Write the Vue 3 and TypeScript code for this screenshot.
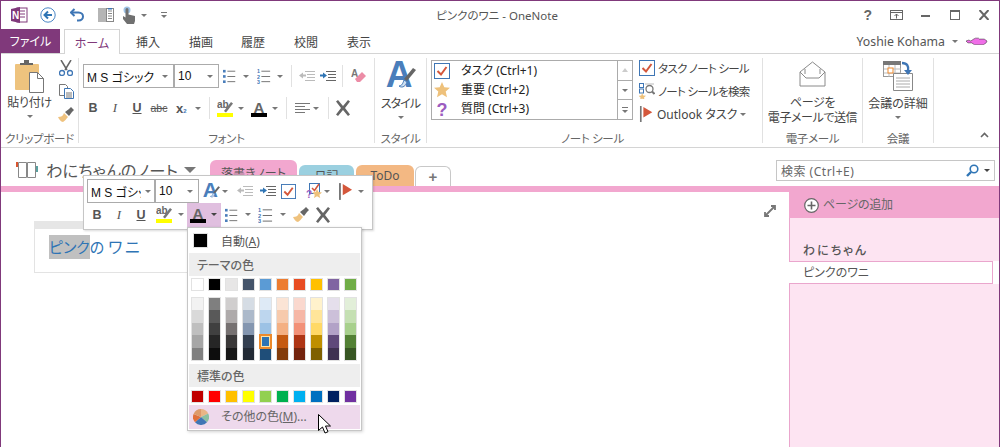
<script setup lang="ts">
const themeTop: string[] = ['#ffffff','#000000','#e7e6e6','#44546a','#5b9bd5','#ed7d31','#e84c22','#ffc000','#8064a2','#70ad47']
const tints: string[][] = [
  ['#f2f2f2','#d9d9d9','#bfbfbf','#a6a6a6','#808080'],
  ['#7f7f7f','#595959','#404040','#262626','#0d0d0d'],
  ['#d0cece','#aeaaaa','#767171','#3a3838','#171717'],
  ['#d5dce4','#acb9ca','#8496b0','#333f50','#222a35'],
  ['#deeaf6','#bdd6ee','#9cc2e5','#2e74b5','#1f4e79'],
  ['#fbe4d5','#f7caac','#f4b083','#c55a11','#833c0b'],
  ['#fad8ce','#f6b7a6','#f29178','#ae3515','#74240e'],
  ['#fff2cc','#ffe599','#ffd966','#bf8f00','#7f6000'],
  ['#e5dfec','#ccc0d9','#b2a2c7','#5f497a','#3f3151'],
  ['#e2efd9','#c5e0b3','#a8d08d','#538135','#375623'],
]
const standard: string[] = ['#c00000','#ff0000','#ffc000','#ffff00','#92d050','#00b050','#00b0f0','#0070c0','#002060','#7030a0']
const tagRows = [
  { icon: '#i-check', label: 'タスク (Ctrl+1)' },
  { icon: '#i-star', label: '重要 (Ctrl+2)' },
  { icon: '#i-question', label: '質問 (Ctrl+3)' },
]
</script>

<template>
  <div class="win">
    <svg class="sprite" xmlns="http://www.w3.org/2000/svg">
      <symbol id="i-bullets" viewBox="0 0 16 16">
        <g fill="#4a7ebb"><rect x="0" y="1" width="3" height="3"/><rect x="0" y="7" width="3" height="3"/><rect x="0" y="13" width="3" height="3"/></g>
        <g fill="#666"><rect x="5" y="2" width="9" height="1"/><rect x="5" y="8" width="9" height="1"/><rect x="5" y="14" width="9" height="1"/></g>
      </symbol>
      <symbol id="i-numbers" viewBox="0 0 16 16">
        <g fill="#3f76b5" font-size="6" font-weight="700" font-family="Liberation Sans, sans-serif"><text x="0" y="5">1</text><text x="0" y="11">2</text><text x="0" y="17">3</text></g>
        <g fill="#666"><rect x="5" y="2" width="10" height="1"/><rect x="5" y="8" width="10" height="1"/><rect x="5" y="14" width="10" height="1"/></g>
      </symbol>
      <symbol id="i-outdent" viewBox="0 0 16 12">
        <g fill="#bbb"><rect x="6" y="1" width="10" height="1"/><rect x="8" y="4" width="8" height="1"/><rect x="8" y="7" width="8" height="1"/><rect x="6" y="10" width="10" height="1"/><path d="M0 5.5 4 2.500v2h3v2H4v2z"/></g>
      </symbol>
      <symbol id="i-indent" viewBox="0 0 16 12">
        <g fill="#666"><rect x="6" y="1" width="10" height="1"/><rect x="8" y="4" width="8" height="1"/><rect x="8" y="7" width="8" height="1"/><rect x="6" y="10" width="10" height="1"/></g>
        <path d="M7 5.500 3 2.500v2H0v2h3v2z" fill="#2f75b5"/>
      </symbol>
      <symbol id="i-hilite" viewBox="0 0 16 17">
        <text x="0" y="8" font-size="10" font-weight="700" fill="#666" font-family="Liberation Sans, sans-serif">ab</text>
        <path d="M7 11 14 2l2 1.500L9 12.500z" fill="#777"/>
        <rect x="0" y="13" width="16" height="4" fill="#ffff00"/>
      </symbol>
      <symbol id="i-fcolor" viewBox="0 0 16 17">
        <text x="8" y="12.500" text-anchor="middle" font-size="15" font-weight="700" fill="#666" font-family="Liberation Sans, sans-serif">A</text>
        <rect x="0" y="13" width="16" height="4" fill="#000"/>
      </symbol>
      <symbol id="i-brush" viewBox="0 0 16 16">
        <path d="M0 10c3 0 5-1 6-4l4 4c-2 2-3 4-5 5-2 0-4-3-5-5z" fill="#efc27e"/>
        <path d="M7 5l4-3 2-2 3 3-2 2-3 4z" fill="#666"/>
      </symbol>
      <symbol id="i-cross" viewBox="0 0 16 16">
        <path d="M1 1.500 3 0l5 6 5-6 2 1.500L10 8l5 6.500-2 1.500-5-6-5 6-2-1.500L6 8z" fill="#666"/>
      </symbol>
      <symbol id="i-check" viewBox="0 0 16 16">
        <rect x=".5" y=".5" width="15" height="15" fill="#fff" stroke="#3f76b5"/>
        <path d="M3.500 8 7 11.500 12.500 4" fill="none" stroke="#d4573b" stroke-width="2"/>
      </symbol>
      <symbol id="i-star" viewBox="0 0 16 16">
        <path d="M8 0l2.300 5.300 5.700.5-4.300 3.800 1.300 5.600L8 12.300l-5 2.900 1.300-5.600L0 5.800l5.700-.5z" fill="#eec17b"/>
      </symbol>
      <symbol id="i-question" viewBox="0 0 16 16">
        <text x="8" y="15" text-anchor="middle" font-size="18" font-weight="700" fill="#9c5cc0" font-family="Liberation Sans, sans-serif">?</text>
      </symbol>
      <symbol id="i-tagfind" viewBox="0 0 16 16">
        <rect x="3.500" y=".5" width="10" height="10" fill="none" stroke="#3f76b5"/>
        <path d="M6 5l2.500 2.500L13 1" fill="none" stroke="#d4573b" stroke-width="1.500"/>
        <text x="0" y="15" font-size="10" font-weight="700" fill="#9c5cc0" font-family="Liberation Sans, sans-serif">?</text>
        <path d="M11 6l1.500 3 3.500.4-2.600 2.300.8 3.300-3.200-1.800L8 15l.8-3.300L6.200 9.400 9.500 9z" fill="#eec17b"/>
      </symbol>
      <symbol id="i-flag" viewBox="0 0 15 18">
        <rect x="0" y="0" width="2" height="18" fill="#777"/>
        <path d="M4 1l10 6-10 6z" fill="#d4573b"/>
      </symbol>
      <symbol id="i-stylea" viewBox="0 0 30 31">
        <text x="13" y="26" text-anchor="middle" font-size="37" font-weight="700" fill="#4a7ebb" font-family="Liberation Sans, sans-serif">A</text>
        <path d="M18 18 27 7l3 2-9 11z" fill="#666"/>
        <path d="M13 25c3 0 4-3 5-6l3 2c-1 3-4 7-8 4z" fill="#cfe0f2" stroke="#4a7ebb"/>
      </symbol>
    </svg>

    <header class="titlebar">
      <div class="qat">
        <svg class="ml10" width="17" height="16" viewBox="0 0 17 16">
          <rect x="6" y="1" width="10" height="14" fill="#fff" stroke="#80397b"/>
          <path d="M9 4h5M9 7h5M9 10h5" stroke="#80397b"/>
          <path d="M0 2l9-2v16l-9-2z" fill="#80397b"/>
          <text x="4.500" y="11.500" text-anchor="middle" font-size="10" font-weight="700" fill="#fff" font-family="Liberation Sans, sans-serif">N</text>
        </svg>
        <svg class="ml12" width="16" height="16" viewBox="0 0 16 16">
          <circle cx="8" cy="8" r="7.200" fill="none" stroke="#4a86c5"/>
          <path d="M12 8H5M8 4.500 4.500 8 8 11.500" fill="none" stroke="#2f75b5" stroke-width="2"/>
        </svg>
        <svg class="ml14" width="15" height="14" viewBox="0 0 15 14">
          <path d="M4.500 1 1 4.500 4.500 8" fill="none" stroke="#3f76b5" stroke-width="2"/>
          <path d="M2 4.500h6.500c6 0 6 8 0 8H7" fill="none" stroke="#3f76b5" stroke-width="2"/>
        </svg>
        <svg class="ml13" width="16" height="14" viewBox="0 0 16 14">
          <rect x="0" y="0" width="8" height="14" fill="#b5b5b5"/>
          <rect x="8.500" y=".5" width="7" height="13" fill="#fff" stroke="#888"/>
          <path d="M10 3h4M10 5.500h4M10 8h4M10 10.500h4" stroke="#888"/>
          <rect x="10" y="0" width="4" height="1.500" fill="#3f76b5"/>
        </svg>
        <svg class="ml8" width="14" height="18" viewBox="0 0 14 18">
          <circle cx="5" cy="4" r="3.500" fill="#9fc3e6"/>
          <path d="M3.500 3.500v8L1 10v3l4 5h7l1-3v-5L6.500 8.500v-5a1.500 1.500 0 0 0-3 0z" fill="#707070"/>
        </svg>
        <i class="caret ml5"></i>
        <span class="custom ml14"><b></b><i class="caret"></i></span>
      </div>
      <div class="title">ピンクのワニ - OneNote</div>
      <div class="winbtns">
        <span class="q">?</span>
        <svg class="ml18" width="13" height="10" viewBox="0 0 13 10">
          <rect x=".5" y=".5" width="12" height="9" fill="none" stroke="#666"/>
          <path d="M0 2.500h13M6.500 8.500V4M4.500 6l2-2 2 2" fill="none" stroke="#666"/>
        </svg>
        <svg class="ml18" width="9" height="3" viewBox="0 0 9 3"><rect width="9" height="2" y="1" fill="#666"/></svg>
        <svg class="ml20" width="10" height="10" viewBox="0 0 10 10"><rect x=".5" y="1" width="9" height="8.500" fill="none" stroke="#666"/><rect width="10" height="2" fill="#666"/></svg>
        <svg class="ml19" width="10" height="10" viewBox="0 0 10 10"><path d="M.5 0l9 10M9.500 0 .5 10" stroke="#666" stroke-width="2"/></svg>
      </div>
    </header>

    <nav class="tabs">
      <div class="file">ファイル</div>
      <div class="tab active">ホーム</div>
      <div class="tab t1">挿入</div>
      <div class="tab t2">描画</div>
      <div class="tab t3">履歴</div>
      <div class="tab t4">校閲</div>
      <div class="tab t5">表示</div>
      <div class="user">
        <span>Yoshie Kohama</span>
        <i class="caret ml7"></i>
        <svg class="ml8" width="22" height="8" viewBox="0 0 23 8">
          <path d="M0 4l3-1 2 1 3-2 2-1h3l1 1h5l3 2-1 2-3 2H9L6 6H2z" fill="#f06ee8" stroke="#222" stroke-width=".5"/>
        </svg>
      </div>
    </nav>

    <section class="ribbon">
      <div class="group g-clip">
        <div class="gbody clip">
          <div class="large paste">
            <svg width="30" height="33" viewBox="0 0 30 33">
              <rect x="0" y="4" width="24" height="26" rx="1" fill="#eec37e"/>
              <path d="M5 5V3h4V0h5v3h4v2z" fill="#666"/>
              <path d="M14.500 12.500h8l6 6v14h-14z" fill="#fff" stroke="#777"/>
              <path d="M22.500 12.500v6h6" fill="none" stroke="#777"/>
            </svg>
            <span class="biglabel">貼り付け</span>
            <i class="caret"></i>
          </div>
          <div class="clipside">
            <svg width="14" height="16" viewBox="0 0 14 16">
              <path d="M2 0l6 10M12 0 6 10" stroke="#666" stroke-width="1.500"/>
              <circle cx="3" cy="13" r="2.500" fill="none" stroke="#3f76b5" stroke-width="1.300"/>
              <circle cx="11" cy="13" r="2.500" fill="none" stroke="#3f76b5" stroke-width="1.300"/>
            </svg>
            <svg width="15" height="15" viewBox="0 0 15 15">
              <path d="M.5.500h6l2 2v9H.5z" fill="#fff" stroke="#777"/>
              <path d="M5.500 4.500h6l3 3v7h-9z" fill="#fff" stroke="#3f76b5"/>
              <path d="M7 9h6M7 11h6M7 13h6" stroke="#777"/>
            </svg>
            <svg width="16" height="16"><use href="#i-brush"/></svg>
          </div>
        </div>
        <div class="glabel">クリップボード</div>
      </div>

      <div class="group g-font">
        <div class="gbody frows">
          <div class="frow r1">
            <div class="combo c-font"><span class="fname">M S ゴシック</span><i class="caret"></i></div>
            <div class="combo c-size"><span class="fname">10</span><i class="caret"></i></div>
            <svg class="ml4" width="14" height="16"><use href="#i-bullets"/></svg>
            <i class="caret ml6"></i>
            <svg class="ml8" width="14" height="16"><use href="#i-numbers"/></svg>
            <i class="caret ml6"></i>
            <span class="vsep ml8"></span>
            <svg class="ml7" width="16" height="12"><use href="#i-outdent"/></svg>
            <svg class="ml5" width="16" height="12"><use href="#i-indent"/></svg>
            <span class="vsep ml6"></span>
            <svg class="ml8" width="16" height="16" viewBox="0 0 16 16">
              <text x="0" y="9" font-size="10" font-weight="700" fill="#777" font-family="Liberation Sans, sans-serif">A</text>
              <path d="M4 11l7-7 4 4-6 6H6z" fill="#ec8ca6"/>
            </svg>
          </div>
          <div class="frow r2">
            <span class="fb">B</span>
            <span class="fb it">I</span>
            <span class="fb ul">U</span>
            <span class="fb st">abc</span>
            <span class="fb sub">x<small>2</small></span>
            <i class="caret"></i>
            <span class="vsep ml8"></span>
            <svg class="ml7" width="16" height="17"><use href="#i-hilite"/></svg>
            <i class="caret ml5"></i>
            <svg class="ml7" width="16" height="17"><use href="#i-fcolor"/></svg>
            <i class="caret ml5"></i>
            <span class="vsep ml8"></span>
            <svg class="ml8" width="15" height="11" viewBox="0 0 15 11"><path d="M0 .500h15M0 3.500h10M0 6.500h15M0 9.500h10" stroke="#777"/></svg>
            <i class="caret ml3"></i>
            <span class="vsep ml9"></span>
            <svg class="ml6" width="16" height="16"><use href="#i-cross"/></svg>
          </div>
        </div>
        <div class="glabel">フォント</div>
      </div>

      <div class="group g-style">
        <div class="gbody large top3">
          <svg width="30" height="31"><use href="#i-stylea"/></svg>
          <span class="biglabel narrow">スタイル</span>
          <i class="caret"></i>
        </div>
        <div class="glabel">スタイル</div>
      </div>

      <div class="group g-tags">
        <div class="gbody tagsbody">
          <div class="taglist">
            <div class="tagrows">
              <div v-for="t in tagRows" :key="t.label" class="tagrow">
                <svg width="16" height="16"><use :href="t.icon"/></svg>
                <span>{{ t.label }}</span>
              </div>
            </div>
            <div class="tagscroll">
              <span><i class="caret up dis"></i></span>
              <span><i class="caret"></i></span>
              <span class="more"><b></b><i class="caret"></i></span>
            </div>
          </div>
          <div class="tagside">
            <div class="sr"><svg width="16" height="16"><use href="#i-check"/></svg><span class="tight">タスク ノート シール</span></div>
            <div class="sr">
              <svg width="16" height="16" viewBox="0 0 16 16">
                <rect x=".5" y=".5" width="4" height="4" fill="none" stroke="#3f76b5"/>
                <rect x=".5" y="6" width="4" height="4" fill="none" stroke="#3f76b5"/>
                <path d="M3 10l1.300 2.500 2.700.3-2 1.700.6 2.500L3 15.500 1 17l.6-2.500-2-1.700 2.700-.3z" fill="#eec17b"/>
                <circle cx="10.500" cy="6" r="3.500" fill="#fff" stroke="#777" stroke-width="1.300"/>
                <path d="M13 8.500l2.500 2.500" stroke="#777" stroke-width="2"/>
                <path d="M6 1h9" stroke="#bbb"/>
              </svg>
              <span class="tight">ノート シールを検索</span>
            </div>
            <div class="sr"><svg width="15" height="16" viewBox="0 0 15 18"><use href="#i-flag"/></svg><span class="ltool">Outlook タスク</span><i class="caret ml3"></i></div>
          </div>
        </div>
        <div class="glabel lbl-tags">ノート シール</div>
      </div>

      <div class="group g-mail">
        <div class="gbody large top3">
          <svg width="27" height="26" viewBox="0 0 27 26">
            <path d="M1 11 13.500 1 26 11v14H1z" fill="#fff" stroke="#8a8a8a"/>
            <path d="M1 11l6 6h13l6-6M6 8v5M21 8v5" fill="none" stroke="#8a8a8a"/>
          </svg>
          <span class="biglabel two">ページを<br>電子メールで送信</span>
        </div>
        <div class="glabel">電子メール</div>
      </div>

      <div class="group g-meet">
        <div class="gbody large top3">
          <svg width="31" height="30" viewBox="0 0 31 30">
            <rect x=".5" y=".5" width="17" height="15" fill="#fff" stroke="#999"/>
            <rect width="18" height="4" fill="#777"/>
            <path d="M6 4v12M12 4v12M1 8h17M1 12h17" stroke="#bbb"/>
            <rect x="5" y="7" width="5" height="5" fill="#fff" stroke="#ed8a2f"/>
            <path d="M10.500 12.500h19v17h-19z" fill="#fff" stroke="#888"/>
            <path d="M13 17h14M13 20h14M13 23h14M13 26h14" stroke="#aaa"/>
            <path d="M19 2c5 0 7 3 6 8" fill="none" stroke="#3f76b5" stroke-width="2.500"/>
            <path d="M21 9h8l-4 5z" fill="#3f76b5"/>
          </svg>
          <span class="biglabel meet">会議の詳細</span>
          <i class="caret"></i>
        </div>
        <div class="glabel">会議</div>
      </div>

      <div class="collapse">
        <svg width="9" height="6" viewBox="0 0 9 6"><path d="M1 5l3.500-3.500L8 5" fill="none" stroke="#666" stroke-width="1.600"/></svg>
      </div>
    </section>

    <div class="nbbar">
      <div class="nb">
        <svg width="22" height="18" viewBox="0 0 22 18">
          <path d="M2.500 1.500h8v15h-8zM11.500 1.500h8v15h-8z" fill="#fff" stroke="#888"/>
          <rect x="0" y="1" width="2" height="5" fill="#d9552f"/>
          <rect x="20" y="5" width="2" height="6" fill="#5aa0a0"/>
        </svg>
        <span class="nbname">わにちゃんのノート</span>
        <i class="caret big"></i>
      </div>
      <div class="stabs">
        <div class="stab pink">落書きノート</div>
        <div class="stab blue">日記</div>
        <div class="stab orange">ToDo</div>
        <div class="stab plus">+</div>
      </div>
      <div class="search">
        <span>検索 (Ctrl+E)</span>
        <svg width="13" height="13" viewBox="0 0 13 13">
          <circle cx="8" cy="5" r="3.800" fill="#fff" stroke="#2f75b5" stroke-width="1.600"/>
          <path d="M5 8 1 12" stroke="#2f75b5" stroke-width="2.400"/>
        </svg>
        <i class="caret dark ml5"></i>
      </div>
    </div>
    <div class="pinkline"></div>

    <div class="content">
      <main class="page">
        <div class="expand">
          <svg width="12" height="12" viewBox="0 0 12 12">
            <path d="M1 11 11 1M1 7v4h4M7 1h4v4" fill="none" stroke="#777" stroke-width="1.800"/>
          </svg>
        </div>
        <div class="outline">
          <div class="handle"></div>
          <div class="note"><span class="sel">ピンク</span>の <span class="wani">ワニ</span></div>
        </div>
      </main>
      <aside class="side">
        <div class="addpage">
          <svg width="15" height="15" viewBox="0 0 15 15">
            <circle cx="7.500" cy="7.500" r="6.800" fill="#fff" stroke="#666" stroke-width="1.200"/>
            <path d="M7.500 3.500v8M3.500 7.500h8" stroke="#666" stroke-width="1.600"/>
          </svg>
          <span>ページの追加</span>
        </div>
        <div class="sectop"><span>わにちゃん</span></div>
        <div class="pagerow">ピンクのワニ</div>
        <div class="secbot"></div>
      </aside>
    </div>

    <div class="mini">
      <div class="mrow m1">
        <div class="combo mc-font"><span class="fname clip-t">M S ゴシック</span><i class="caret"></i></div>
        <div class="combo mc-size"><span class="fname">10</span><i class="caret"></i></div>
        <svg class="ml4" width="17" height="18" viewBox="0 0 30 31"><use href="#i-stylea" width="30" height="31"/></svg>
        <i class="caret ml2"></i>
        <svg class="ml9" width="16" height="12"><use href="#i-outdent"/></svg>
        <svg class="ml7" width="16" height="12"><use href="#i-indent"/></svg>
        <svg class="ml5" width="15" height="15"><use href="#i-check"/></svg>
        <svg class="ml10" width="16" height="16"><use href="#i-tagfind"/></svg>
        <i class="caret ml2"></i>
        <svg class="ml9" width="14" height="17" viewBox="0 0 15 18"><use href="#i-flag"/></svg>
        <i class="caret ml5"></i>
      </div>
      <div class="mrow m2">
        <span class="fb">B</span>
        <span class="fb it">I</span>
        <span class="fb ul">U</span>
        <svg class="ml4" width="16" height="17"><use href="#i-hilite"/></svg>
        <i class="caret ml6"></i>
        <div class="fcbtn">
          <svg width="16" height="17"><use href="#i-fcolor"/></svg>
          <i class="caret dark"></i>
        </div>
        <svg class="ml4" width="14" height="16"><use href="#i-bullets"/></svg>
        <i class="caret ml6"></i>
        <svg class="ml7" width="15" height="16"><use href="#i-numbers"/></svg>
        <i class="caret ml7"></i>
        <svg class="ml7" width="16" height="16"><use href="#i-brush"/></svg>
        <svg class="ml6" width="16" height="16"><use href="#i-cross"/></svg>
      </div>
    </div>

    <div class="menu">
      <div class="auto"><span class="autoswatch"></span><span>自動(<u>A</u>)</span></div>
      <div class="mhead">テーマの色</div>
      <div class="swatches top">
        <span v-for="c in themeTop" :key="c" class="sw" :style="{ background: c }"></span>
      </div>
      <div class="swatches tints">
        <div v-for="(col, i) in tints" :key="i" class="tcol">
          <span v-for="(c, j) in col" :key="j" :class="['tc', { picked: i === 4 && j === 3 }]" :style="{ background: c }"></span>
        </div>
      </div>
      <div class="mhead h2">標準の色</div>
      <div class="swatches std">
        <span v-for="c in standard" :key="c" class="sw" :style="{ background: c }"></span>
      </div>
      <div class="more-row">
        <svg width="16" height="16" viewBox="0 0 16 16">
          <path d="M8 8V0a8 8 0 0 1 7.200 4.500z" fill="#e9b585"/>
          <path d="M8 8l7.200-3.500A8 8 0 0 1 14 13.300z" fill="#8cc0a0"/>
          <path d="M8 8l6 5.300a8 8 0 0 1-12 0z" fill="#3f76b5"/>
          <path d="M8 8l-6 5.300A8 8 0 0 1 .6 5z" fill="#e0703c"/>
          <path d="M8 8 .6 5A8 8 0 0 1 8 0z" fill="#dd9a6a"/>
        </svg>
        <span>その他の色(<u>M</u>)...</span>
      </div>
    </div>

    <svg class="cursor" width="13" height="20" viewBox="0 0 13 20">
      <path d="M.5.500v16l4-3.500 2.500 6 3-1.300L7.500 12H12.500z" fill="#fff" stroke="#000"/>
    </svg>
  </div>
</template>

<style scoped>
.win {
  position: relative;
  width: 1000px;
  height: 447px;
  box-sizing: border-box;
  border: 1px solid #80397b;
  border-bottom: none;
  background: #fff;
  overflow: hidden;
  display: flex;
  flex-direction: column;
  font-family: "Noto Sans", "Noto Sans CJK JP", sans-serif;
  font-size: 12px;
  font-feature-settings: "palt";
  color: #444;
}
.sprite { display: none; }
svg { display: block; flex: none; }

.ml2 { margin-left: 2px; } .ml3 { margin-left: 3px; } .ml4 { margin-left: 4px; } .ml5 { margin-left: 5px; } .ml6 { margin-left: 6px; }
.ml7 { margin-left: 7px; } .ml8 { margin-left: 8px; } .ml9 { margin-left: 9px; } .ml10 { margin-left: 10px; }
.ml12 { margin-left: 12px; } .ml13 { margin-left: 13px; } .ml14 { margin-left: 14px; } .ml18 { margin-left: 18px; } .ml19 { margin-left: 19px; } .ml20 { margin-left: 20px; }

.caret {
  display: block;
  flex: none;
  width: 0;
  height: 0;
  border-left: 3px solid transparent;
  border-right: 3px solid transparent;
  border-top: 3px solid #777;
}
.caret.dark { border-top-color: #444; }
.caret.big { border-left-width: 6px; border-right-width: 6px; border-top-width: 6px; margin-left: 6px; border-top-color: #777; }
.caret.up { border-top: none; border-bottom: 4px solid #777; }
.caret.up.dis { border-bottom-color: #ccc; }

.titlebar {
  height: 28px;
  flex: none;
  display: grid;
  grid-template-columns: 1fr auto 1fr;
  align-items: center;
}
.qat { display: flex; align-items: center; }
.custom { display: flex; flex-direction: column; gap: 2px; align-items: center; }
.custom b { width: 6px; height: 1px; background: #777; display: block; }
.title { margin-right: 6px; color: #555; font-size: 11.500px; }
.winbtns { display: flex; align-items: center; justify-content: flex-end; padding-right: 10px; }
.q { font: 700 14px "Liberation Sans", sans-serif; color: #666; }

.tabs {
  height: 24px;
  flex: none;
  display: flex;
  align-items: stretch;
  position: relative;
}
.file {
  width: 59px;
  background: #80397b;
  color: #fff;
  display: flex;
  align-items: center;
  justify-content: center;
}
.tab { display: flex; align-items: center; justify-content: center; color: #444; padding-top: 1px; box-sizing: border-box; }
.tab.active {
  width: 56px;
  margin-left: 4px;
  margin-bottom: -1px;
  border: 1px solid #d4d4d4;
  border-bottom: none;
  background: #fff;
  color: #80397b;
  position: relative;
  z-index: 1;
}
.t1 { margin-left: 16px; }
.t2 { margin-left: 29px; }
.t3 { margin-left: 28px; }
.t4 { margin-left: 29px; }
.t5 { margin-left: 29px; }
.user { margin-left: auto; padding-right: 11px; display: flex; align-items: center; color: #555; font-size: 12.300px; }

.ribbon {
  height: 95px;
  flex: none;
  box-sizing: border-box;
  border-top: 1px solid #d4d4d4;
  border-bottom: 1px solid #d4d4d4;
  display: flex;
  padding-top: 4px;
}
.group {
  box-sizing: border-box;
  height: 85px;
  border-right: 1px solid #e1e1e1;
  display: flex;
  flex-direction: column;
}
.gbody { height: 72px; flex: none; }
.glabel { height: 13px; line-height: 17px; text-align: center; color: #666; font-size: 11.500px; letter-spacing: -.3px; white-space: nowrap; }
.g-clip { width: 78px; }
.g-font { width: 296px; }
.g-style { width: 52px; }
.g-tags { width: 336px; }
.g-mail { width: 100px; }
.g-meet { width: 71px; }
.large { display: flex; flex-direction: column; align-items: center; }
.top3 { padding-top: 3px; box-sizing: border-box; }
.biglabel { color: #444; line-height: 15px; margin-top: 4px; margin-bottom: 5px; white-space: nowrap; text-align: center; letter-spacing: -.3px; }
.biglabel.narrow { letter-spacing: -.9px; }
.biglabel.two { margin-top: 8px; letter-spacing: -.4px; }
.biglabel.meet { margin-top: 5px; margin-bottom: 5px; letter-spacing: 0; }

.clip { display: flex; padding-top: 2px; box-sizing: border-box; }
.paste { width: 53px; margin-left: 2px; padding-top: 0; }
.paste .biglabel { margin-top: 2px; }
.clipside { margin-left: 2px; padding-top: 0; display: flex; flex-direction: column; gap: 8px; align-items: center; }

.frows { display: flex; flex-direction: column; padding: 6px 0 0 4px; box-sizing: border-box; }
.frow { display: flex; align-items: center; height: 24px; }
.r2 { margin-top: 8px; margin-left: -1px; }
.combo {
  box-sizing: border-box;
  height: 24px;
  border: 1px solid #ababab;
  display: flex;
  align-items: center;
  justify-content: space-between;
  padding: 0 5px 0 3px;
  background: #fff;
}
.c-font { width: 91px; }
.c-size { width: 45px; }
.fname { font-family: "Liberation Sans", "Noto Sans CJK JP", sans-serif; color: #111; font-size: 12px; white-space: nowrap; }
.vsep { width: 1px; height: 22px; background: #e1e1e1; flex: none; display: block; }
.fb {
  width: 22px;
  flex: none;
  text-align: center;
  font: 700 12.500px "Liberation Sans", sans-serif;
  color: #555;
}
.fb.it { font: italic 400 13px "Liberation Serif", serif; }
.fb.ul { text-decoration: underline; }
.fb.st { text-decoration: line-through; font-weight: 400; font-size: 10.500px; }
.fb.sub { width: 25px; padding-left: 6px; box-sizing: border-box; text-align: left; font-size: 13px; }
.fb.sub small { font-size: 6px; color: #3f76b5; }

.tagsbody { display: flex; padding-left: 4px; padding-top: 2px; box-sizing: border-box; }
.taglist {
  box-sizing: border-box;
  width: 202px;
  height: 60px;
  border: 1px solid #ababab;
  display: flex;
}
.tagrows { flex: 1; }
.tagrow { height: 19.300px; display: flex; align-items: center; padding-left: 2px; color: #222; }
.tagrow span { margin-left: 11px; padding-bottom: 2px; }
.tagscroll { width: 14px; border-left: 1px solid #ababab; display: flex; flex-direction: column; }
.tagscroll span { flex: 1; display: flex; flex-direction: column; gap: 2px; align-items: center; justify-content: center; }
.tagscroll span + span { border-top: 1px solid #ababab; }
.tagscroll b { display: block; width: 6px; height: 1px; background: #777; }
.tagside { margin-left: 6px; display: flex; flex-direction: column; gap: 7px; }
.sr { height: 16px; display: flex; align-items: center; color: #444; white-space: nowrap; }
.sr span { margin-left: 3px; }
.tight { font-size: 11.500px; letter-spacing: -.7px; }
.lbl-tags { margin-right: 4px; }

.collapse { flex: 1; display: flex; align-items: flex-end; justify-content: flex-end; padding: 0 10px 5px 0; height: 85px; box-sizing: border-box; }

.nbbar { height: 38px; flex: none; display: flex; align-items: flex-end; }
.nb { width: 209px; height: 38px; box-sizing: border-box; padding: 6px 0 0 15px; display: flex; align-items: center; }
.nbname { font-size: 16.300px; color: #555; margin-left: 8px; white-space: nowrap; }
.stabs { display: flex; align-items: flex-end; gap: 2px; }
.stab {
  height: 21px;
  display: flex;
  align-items: center;
  justify-content: center;
  border-radius: 6px 6px 0 0;
  color: #555;
  box-sizing: border-box;
}
.pink { width: 87px; height: 26px; background: #f2a7cf; }
.blue { width: 55px; background: #9bd0e0; }
.orange { width: 58px; background: #f3b883; margin-right: -1px; }
.plus { width: 36px; height: 20px; border: 1px solid #c8c8c8; border-bottom: none; font: 700 15px "Liberation Sans", sans-serif; color: #777; background: #fff; }
.search {
  margin-left: auto;
  margin-right: 4px;
  margin-bottom: 5px;
  box-sizing: border-box;
  width: 219px;
  height: 21px;
  border: 1px solid #c6c6c6;
  display: flex;
  align-items: center;
  padding: 0 4px;
  color: #666;
}
.search span { flex: 1; letter-spacing: .5px; }
.pinkline { height: 6px; flex: none; background: #f2a7cf; }

.content { flex: 1; display: flex; min-height: 0; }
.page { flex: 1; position: relative; padding: 29px 0 0 33px; box-sizing: border-box; }
.expand { position: absolute; right: 13px; top: 13px; }
.outline { width: 160px; height: 52px; box-sizing: border-box; border: 1px solid #e3e3e3; border-top: none; }
.handle { height: 8px; background: #e6e6e6; margin: 0 -1px; }
.note {
  margin: 6px 0 0 14px;
  height: 24px;
  line-height: 24px;
  font-size: 15px;
  color: #2e74b5;
  white-space: nowrap;
}
.sel { background: #c0c0c0; display: inline-block; height: 24px; }
.wani { letter-spacing: 2.500px; font-size: 16px; }

.side { width: 210px; flex: none; display: flex; flex-direction: column; }
.addpage {
  height: 26px;
  flex: none;
  box-sizing: border-box;
  background: #f2a7cf;
  display: flex;
  align-items: center;
  padding-left: 15px;
  color: #666;
}
.addpage span { margin-left: 4px; padding-bottom: 3px; letter-spacing: -.2px; }
.sectop {
  height: 43px;
  flex: none;
  box-sizing: border-box;
  background: #fde4f2;
  border-left: 1px solid #eaa6cd;
  padding: 25px 0 0 13px;
  line-height: 16px;
  letter-spacing: 2px;
  font-weight: 500;
  color: #555;
}
.pagerow {
  height: 23px;
  width: 204px;
  flex: none;
  box-sizing: border-box;
  background: #fff;
  border: 1px solid #eaa6cd;
  border-left: none;
  padding-left: 14px;
  line-height: 21px;
  color: #555;
}
.secbot { flex: 1; background: #fde4f2; border-left: 1px solid #eaa6cd; }

.mini {
  position: absolute;
  left: 82px;
  top: 174px;
  width: 290px;
  height: 55px;
  box-sizing: border-box;
  background: #fff;
  border: 1px solid #c6c6c6;
  box-shadow: 1px 1px 2px rgba(0,0,0,.15);
  padding: 3px 0 0 3px;
}
.mrow { display: flex; align-items: center; }
.m1 { height: 24px; }
.m2 { height: 27px; margin-left: -1px; }
.m2 > .fb, .m2 > svg, .m2 > .caret { margin-bottom: 4px; }
.mc-font { width: 68px; height: 24px; padding-right: 3px; }
.mc-font .clip-t { width: 50px; overflow: hidden; }
.mc-size { width: 44px; height: 24px; }
.fcbtn {
  width: 34px;
  height: 27px;
  margin-left: 3px;
  background: #e0bfdf;
  display: flex;
  align-items: center;
  box-sizing: border-box;
  padding: 0 0 4px 3px;
  gap: 5px;
}

.menu {
  position: absolute;
  left: 186px;
  top: 226px;
  width: 175px;
  height: 204px;
  box-sizing: border-box;
  background: #fff;
  border: 1px solid #c6c6c6;
  box-shadow: 1px 1px 3px rgba(0,0,0,.18);
  display: flex;
  flex-direction: column;
  color: #555;
}
.auto { height: 25px; flex: none; display: flex; align-items: center; padding-left: 5px; }
.autoswatch { width: 15px; height: 15px; box-sizing: border-box; background: #000; border: 1px solid #e0e0e0; margin-right: 13px; display: block; }
.mhead {
  height: 23px;
  flex: none;
  margin: 0 1px;
  background: #eeeeee;
  color: #666;
  line-height: 25px;
  padding-left: 8px;
  font-weight: 500;
}
.swatches { display: flex; gap: 4px; margin-left: 3px; flex: none; }
.swatches.top { margin-top: 2px; }
.swatches.tints { margin-top: 6px; }
.swatches.std { margin-top: 3px; }
.sw { width: 13px; height: 13px; box-sizing: border-box; border: 1px solid #e2e2e2; display: block; }
.tcol { width: 13px; height: 64px; box-sizing: border-box; border: 1px solid #e2e2e2; display: flex; flex-direction: column; }
.tc { flex: 1; display: block; }
.tc.picked { box-shadow: inset 0 0 0 1px #ec8a2c, inset 0 0 0 2px #fde3a7; outline: 1px solid #ec8a2c; position: relative; }
.h2 { margin-top: 3px; }
.more-row {
  height: 24px;
  margin: 2px 1px 0;
  flex: none;
  background: #eed9ec;
  display: flex;
  align-items: center;
  padding-left: 4px;
  color: #666;
}
.more-row span { margin-left: 12px; padding-bottom: 2px; }
.cursor { position: absolute; left: 317px; top: 413px; }
</style>
